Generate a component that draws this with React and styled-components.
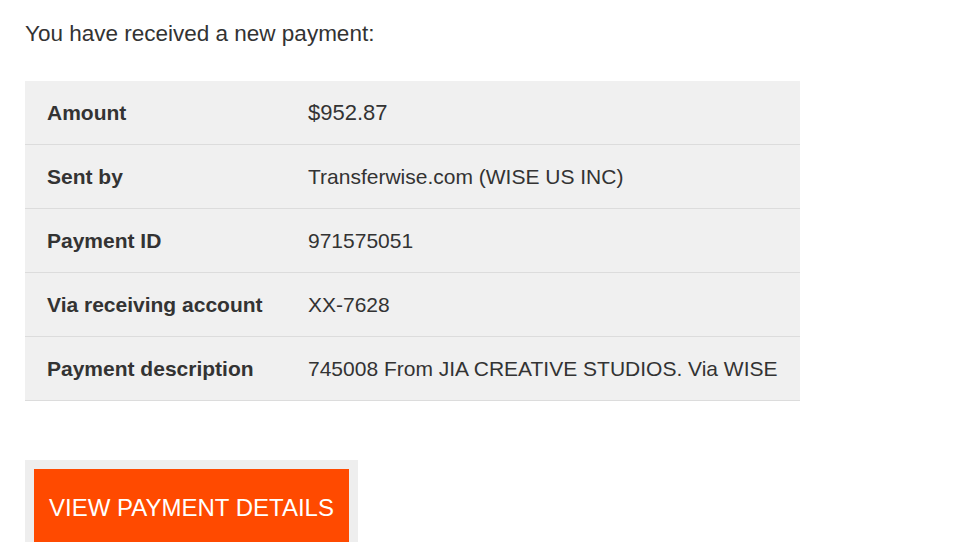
import React from "react";
import styled, { createGlobalStyle } from "styled-components";

const GlobalStyle = createGlobalStyle`
  body {
    margin: 0;
    background: #ffffff;
    font-family: "Liberation Sans", Arial, sans-serif;
    color: #333333;
  }
`;

const Page = styled.div`
  padding: 19px 25px 0;
  height: 542px;
  box-sizing: border-box;
  overflow: hidden;
`;

const Intro = styled.p`
  margin: 0 0 32px;
  font-size: 22.5px;
  line-height: 30px;
  color: #333333;
`;

const Table = styled.div`
  width: 775px;
  background: #f0f0f0;
`;

const Row = styled.div`
  display: grid;
  grid-template-columns: 261px 1fr;
  align-items: center;
  height: 63px;
  padding: 0 22px;
  border-bottom: 1px solid #dcdcdc;
`;

const Label = styled.div`
  font-size: 21px;
  font-weight: 700;
  color: #333333;
`;

const Value = styled.div`
  font-size: ${(p) => (p.$large ? "22px" : "21px")};
  color: #333333;
`;

const ButtonFrame = styled.div`
  display: inline-block;
  margin-top: 59px;
  padding: 9px 9px 0;
  background: #eeeeee;
`;

const Button = styled.a`
  display: block;
  padding: 25px 15px 28px;
  background: #ff4a00;
  color: #ffffff;
  font-size: 24px;
  line-height: 28px;
  text-decoration: none;
`;

const rows = [
  { label: "Amount", value: "$952.87", large: true },
  { label: "Sent by", value: "Transferwise.com (WISE US INC)" },
  { label: "Payment ID", value: "971575051" },
  { label: "Via receiving account", value: "XX-7628" },
  { label: "Payment description", value: "745008 From JIA CREATIVE STUDIOS. Via WISE" },
];

export default function App() {
  return (
    <>
      <GlobalStyle />
      <Page>
        <Intro>You have received a new payment:</Intro>
        <Table>
          {rows.map((r) => (
            <Row key={r.label}>
              <Label>{r.label}</Label>
              <Value $large={r.large}>{r.value}</Value>
            </Row>
          ))}
        </Table>
        <ButtonFrame>
          <Button href="#">VIEW PAYMENT DETAILS</Button>
        </ButtonFrame>
      </Page>
    </>
  );
}
